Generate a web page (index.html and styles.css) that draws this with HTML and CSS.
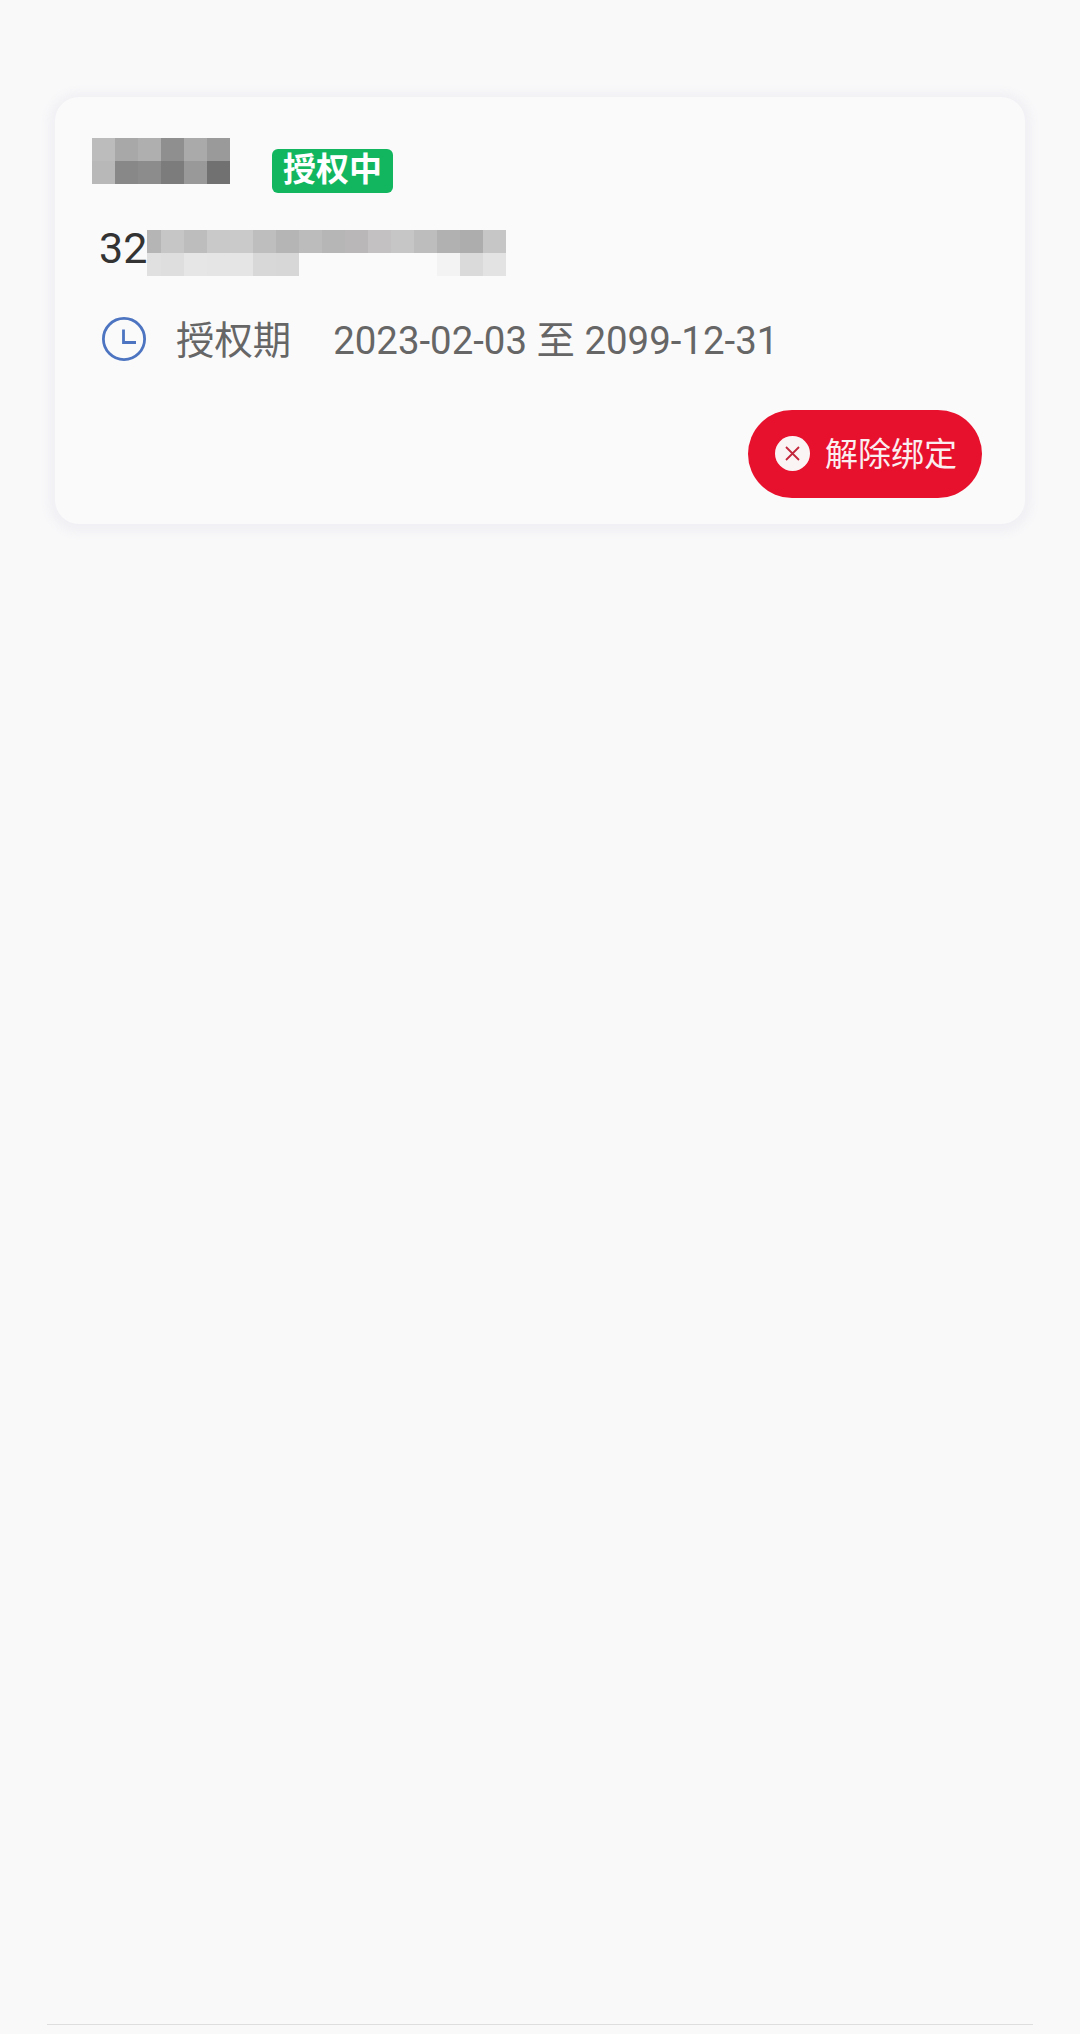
FILE: index.html
```html
<!DOCTYPE html>
<html lang="zh-CN">
<head>
    <meta charset="UTF-8">
    <meta name="viewport" content="width=device-width, initial-scale=1.0">
    <title>授权管理</title>
    <link rel="stylesheet" href="styles.css">
</head>
<body>
    <div class="page">
        <div class="card">
            <!-- Name (mosaic) and status -->
            <div class="card-head">
                <svg class="mosaic" width="138" height="46" viewBox="0 0 138 46" shape-rendering="crispEdges" aria-hidden="true">
                    <rect x="0" y="0" width="23" height="23" fill="#bcbcbc"/>
                    <rect x="23" y="0" width="23" height="23" fill="#a8a8a8"/>
                    <rect x="46" y="0" width="23" height="23" fill="#afafaf"/>
                    <rect x="69" y="0" width="23" height="23" fill="#8f8f8f"/>
                    <rect x="92" y="0" width="23" height="23" fill="#aaaaaa"/>
                    <rect x="115" y="0" width="23" height="23" fill="#9a9a9a"/>
                    <rect x="0" y="23" width="23" height="23" fill="#b8b8b8"/>
                    <rect x="23" y="23" width="23" height="23" fill="#888888"/>
                    <rect x="46" y="23" width="23" height="23" fill="#8c8c8c"/>
                    <rect x="69" y="23" width="23" height="23" fill="#7c7c7c"/>
                    <rect x="92" y="23" width="23" height="23" fill="#999999"/>
                    <rect x="115" y="23" width="23" height="23" fill="#717171"/>
                </svg>
                <span class="badge">授权中</span>
            </div>

            <!-- Number (mosaic after the first digits) -->
            <div class="card-number">
                <span class="number-text">32</span>
                <svg class="mosaic" width="359" height="46" viewBox="0 0 359 46" shape-rendering="crispEdges" aria-hidden="true">
                    <rect x="0" y="0" width="14" height="23" fill="#b5b5b5"/>
                    <rect x="14" y="0" width="23" height="23" fill="#c6c6c6"/>
                    <rect x="37" y="0" width="23" height="23" fill="#bdbdbd"/>
                    <rect x="60" y="0" width="23" height="23" fill="#c9c9c9"/>
                    <rect x="83" y="0" width="23" height="23" fill="#cacaca"/>
                    <rect x="106" y="0" width="23" height="23" fill="#bebebe"/>
                    <rect x="129" y="0" width="23" height="23" fill="#b5b5b5"/>
                    <rect x="152" y="0" width="23" height="23" fill="#bcbcbc"/>
                    <rect x="175" y="0" width="23" height="23" fill="#b6b6b6"/>
                    <rect x="198" y="0" width="23" height="23" fill="#b9b7b7"/>
                    <rect x="221" y="0" width="23" height="23" fill="#c3c1c1"/>
                    <rect x="244" y="0" width="23" height="23" fill="#c6c6c6"/>
                    <rect x="267" y="0" width="23" height="23" fill="#bdbdbd"/>
                    <rect x="290" y="0" width="23" height="23" fill="#b1b1b1"/>
                    <rect x="313" y="0" width="23" height="23" fill="#adadad"/>
                    <rect x="336" y="0" width="23" height="23" fill="#c6c6c6"/>
                    <rect x="0" y="23" width="14" height="23" fill="#e0e0e0"/>
                    <rect x="14" y="23" width="23" height="23" fill="#dedede"/>
                    <rect x="37" y="23" width="23" height="23" fill="#e6e6e6"/>
                    <rect x="60" y="23" width="23" height="23" fill="#e5e5e5"/>
                    <rect x="83" y="23" width="23" height="23" fill="#e5e5e5"/>
                    <rect x="106" y="23" width="23" height="23" fill="#d8d8d8"/>
                    <rect x="129" y="23" width="23" height="23" fill="#d7d7d7"/>
                    <rect x="290" y="23" width="23" height="23" fill="#f3f3f3"/>
                    <rect x="313" y="23" width="23" height="23" fill="#dadada"/>
                    <rect x="336" y="23" width="23" height="23" fill="#e3e3e3"/>
                </svg>
            </div>

            <!-- Authorization period -->
            <div class="card-period">
                <svg class="clock" width="44" height="44" viewBox="0 0 44 44" fill="none" stroke="#4c74c0" stroke-width="2.8" aria-hidden="true">
                    <circle cx="22" cy="22" r="20.6"/>
                    <path d="M21.5 12.5V25.5H34"/>
                </svg>
                <span class="period-label">授权期</span>
                <span class="period-date">2023-02-03 至 2099-12-31</span>
            </div>

            <div class="card-actions">
                <button class="unbind-btn">
                    <svg class="unbind-icon" width="35" height="35" viewBox="0 0 35 35" aria-hidden="true">
                        <circle cx="17.5" cy="17.5" r="17.5" fill="#fbf4f5"/>
                        <path d="M11 11L24 24M24 11L11 24" fill="none" stroke="#c2273c" stroke-width="1.8"/>
                    </svg>
                    <span class="unbind-text">解除绑定</span>
                </button>
            </div>
        </div>

        <div class="bottom-line"></div>
    </div>
</body>
</html>
```

FILE: styles.css
```css
/* General Styles */
body {
    margin: 0;
    padding: 0;
    background-color: #f9f9fa;
    font-family: Roboto, "Noto Sans CJK SC", sans-serif;
}
.page {
    display: flex;
    flex-direction: column;
    height: 2034px;
    padding: 97px 47px 9px;
    box-sizing: border-box;
}
.mosaic {
    display: block;
    flex: none;
}

/* Card */
.card {
    height: 427px;
    margin: 0 8px;
    padding: 41px 43px 0 37px;
    box-sizing: border-box;
    background: #fafafb;
    border-radius: 24px;
    box-shadow: 0 2px 10px 7px #f1f1f5;
}
.card-head {
    display: flex;
    align-items: flex-start;
}
.badge {
    margin: 11px 0 0 42px;
    width: 121px;
    height: 44px;
    background: #12b65f;
    border-radius: 6px;
    color: #fff;
    font-size: 33px;
    font-weight: 700;
    line-height: 42px;
    text-align: center;
}
.card-number {
    display: flex;
    height: 46px;
    margin: 37px 0 0 7px;
}
.number-text {
    width: 48px;
    color: #333;
    font-size: 43px;
    line-height: 36px;
}
.card-period {
    display: flex;
    align-items: center;
    height: 44px;
    margin: 41px 0 0 10px;
    color: #666;
    font-size: 38.4px;
}
.clock {
    flex: none;
}
.period-label {
    margin: 0 0 5px 30px;
}
.period-date {
    margin: 0 0 5px 42px;
}

/* Action button */
.card-actions {
    display: flex;
    justify-content: flex-end;
    margin-top: 49px;
}
.unbind-btn {
    display: flex;
    align-items: center;
    gap: 15px;
    height: 88px;
    padding: 0 25px 2px 27px;
    background-color: #e8112d;
    border: none;
    border-radius: 44px;
    color: #fbeef0;
    font-family: "Noto Sans CJK SC", sans-serif;
    font-size: 33px;
}
.unbind-text {
    margin-bottom: 3px;
}

.bottom-line {
    margin-top: auto;
    height: 1px;
    background: #dedede;
}
```
